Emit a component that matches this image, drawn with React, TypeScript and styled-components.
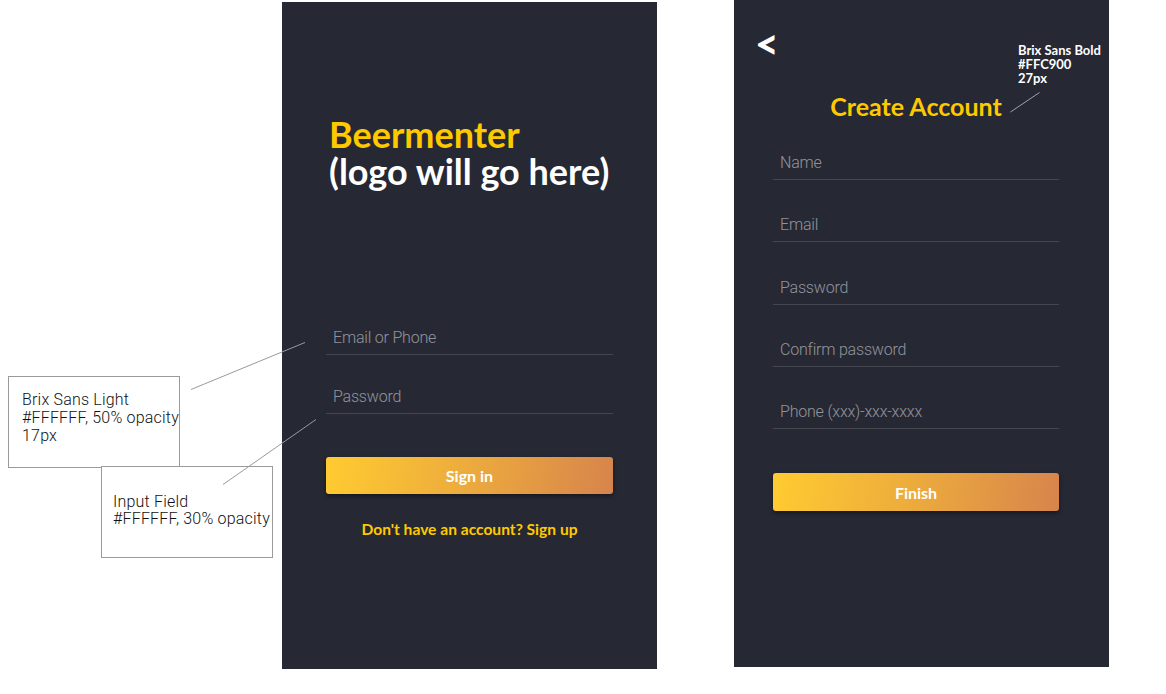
import React from "react";
import styled, { createGlobalStyle } from "styled-components";

const Global = createGlobalStyle`
  html, body { margin: 0; padding: 0; background: #ffffff; }
  body { font-family: "Roboto", "Liberation Sans", sans-serif; }
  * { box-sizing: border-box; }
`;

const Canvas = styled.div`
  position: relative;
  width: 1166px;
  height: 694px;
  background: #ffffff;
  overflow: hidden;
`;

const Row = styled.div`
  display: flex;
  align-items: flex-start;
  gap: 77px;
  padding-left: 282px;
`;

const Phone = styled.section<{ $top: number }>`
  position: relative;
  width: 375px;
  height: 667px;
  margin-top: ${(p) => p.$top}px;
  background: #262834;
  display: flex;
  flex-direction: column;
`;

const LoginBody = styled.div`
  display: flex;
  flex-direction: column;
  padding: 114px 44px 0 44px;
`;

const Title = styled.h1`
  margin: 0 0 0 3px;
  font-family: "Lato", "Liberation Sans", sans-serif;
  font-weight: 700;
  font-size: 36px;
  line-height: 37px;
  color: #ffffff;
`;

const Brand = styled.span`
  display: block;
  color: #ffc900;
`;

const Fields = styled.div<{ $gap: number; $top: number }>`
  display: flex;
  flex-direction: column;
  gap: ${(p) => p.$gap}px;
  margin-top: ${(p) => p.$top}px;
`;

const Field = styled.div`
  padding: 0 7px 6px;
  border-bottom: 1px solid rgba(255, 255, 255, 0.14);
  font-family: "Roboto", "Liberation Sans", sans-serif;
  font-weight: 300;
  font-size: 16px;
  letter-spacing: -0.2px;
  line-height: 20px;
  color: rgba(255, 255, 255, 0.5);
`;

const Button = styled.button<{ $top: number; $h: number }>`
  margin-top: ${(p) => p.$top}px;
  height: ${(p) => p.$h}px;
  width: 100%;
  border: none;
  border-radius: 3px;
  background: linear-gradient(100deg, #ffcb31 0%, #eeae3c 45%, #d7844c 100%);
  box-shadow: 0 2px 4px rgba(0, 0, 0, 0.45);
  color: #ffffff;
  font-family: "Lato", "Liberation Sans", sans-serif;
  font-weight: 700;
  font-size: 16px;
  padding: 0;
`;

const LinkText = styled.p`
  margin: 26px 0 0;
  text-align: center;
  font-family: "Lato", "Liberation Sans", sans-serif;
  font-weight: 700;
  font-size: 15.6px;
  line-height: 18px;
  color: #ffc900;
`;

const SignupBody = styled.div`
  display: flex;
  flex-direction: column;
  padding: 0 50px 0 39px;
`;

const Back = styled.div`
  margin: 27px 0 0 -18px;
  height: 33px;
  font-family: "Lato", "Liberation Sans", sans-serif;
  font-weight: 900;
  font-size: 41px;
  line-height: 34px;
  color: #ffffff;
`;

const Heading = styled.h2`
  margin: 32px 0 0;
  text-align: center;
  font-family: "Lato", "Liberation Sans", sans-serif;
  font-weight: 700;
  font-size: 25px;
  line-height: 28px;
  color: #ffc900;
`;

const Note = styled.div<{ $left: number; $top: number; $w: number; $h: number; $pl: number; $pt: number; $lh: number }>`
  position: absolute;
  left: ${(p) => p.$left}px;
  top: ${(p) => p.$top}px;
  width: ${(p) => p.$w}px;
  height: ${(p) => p.$h}px;
  padding: ${(p) => p.$pt}px 0 0 ${(p) => p.$pl}px;
  border: 1px solid #9a9a9a;
  background: #ffffff;
  font-family: "Roboto", "Liberation Sans", sans-serif;
  font-weight: 300;
  font-size: 16px;
  letter-spacing: 0.2px;
  line-height: ${(p) => p.$lh}px;
  color: #111111;
  white-space: nowrap;
`;

const SpecNote = styled.div`
  position: absolute;
  left: 284px;
  top: 43px;
  font-family: "Lato", "Liberation Sans", sans-serif;
  font-weight: 700;
  font-size: 13px;
  line-height: 14px;
  color: #ffffff;
`;

const Leaders = styled.svg`
  position: absolute;
  left: 0;
  top: 0;
  pointer-events: none;
`;

export default function App() {
  return (
    <>
      <Global />
      <Canvas>
        <Row>
          <Phone $top={2}>
            <LoginBody>
              <Title>
                <Brand>Beermenter</Brand>
                (logo will go here)
              </Title>
              <Fields $gap={32} $top={138}>
                <Field>Email or Phone</Field>
                <Field>Password</Field>
              </Fields>
              <Button $top={43} $h={37}>Sign in</Button>
              <LinkText>Don't have an account? Sign up</LinkText>
            </LoginBody>
          </Phone>
          <Phone $top={0}>
            <SignupBody>
              <Back>&lt;</Back>
              <Heading>Create Account</Heading>
              <Fields $gap={35.25} $top={33}>
                <Field>Name</Field>
                <Field>Email</Field>
                <Field>Password</Field>
                <Field>Confirm password</Field>
                <Field>Phone (xxx)-xxx-xxxx</Field>
              </Fields>
              <Button $top={44} $h={38}>Finish</Button>
            </SignupBody>
            <SpecNote>
              Brix Sans Bold
              <br />
              #FFC900
              <br />
              27px
            </SpecNote>
          </Phone>
        </Row>
        <Note $left={8} $top={376} $w={172} $h={92} $pl={13} $pt={14} $lh={18}>
          Brix Sans Light
          <br />
          #FFFFFF, 50% opacity
          <br />
          17px
        </Note>
        <Note $left={101} $top={466} $w={172} $h={92} $pl={11} $pt={26} $lh={17}>
          Input Field
          <br />
          #FFFFFF, 30% opacity
        </Note>
        <Leaders width="1166" height="694" viewBox="0 0 1166 694">
          <line x1="191" y1="389.5" x2="305" y2="342.5" stroke="#9a9a9a" strokeWidth="1" />
          <line x1="223" y1="484.5" x2="316" y2="419.5" stroke="#9a9a9a" strokeWidth="1" />
          <line x1="1039.5" y1="92.5" x2="1010.5" y2="112" stroke="#a0a0a8" strokeWidth="1" />
        </Leaders>
      </Canvas>
    </>
  );
}
